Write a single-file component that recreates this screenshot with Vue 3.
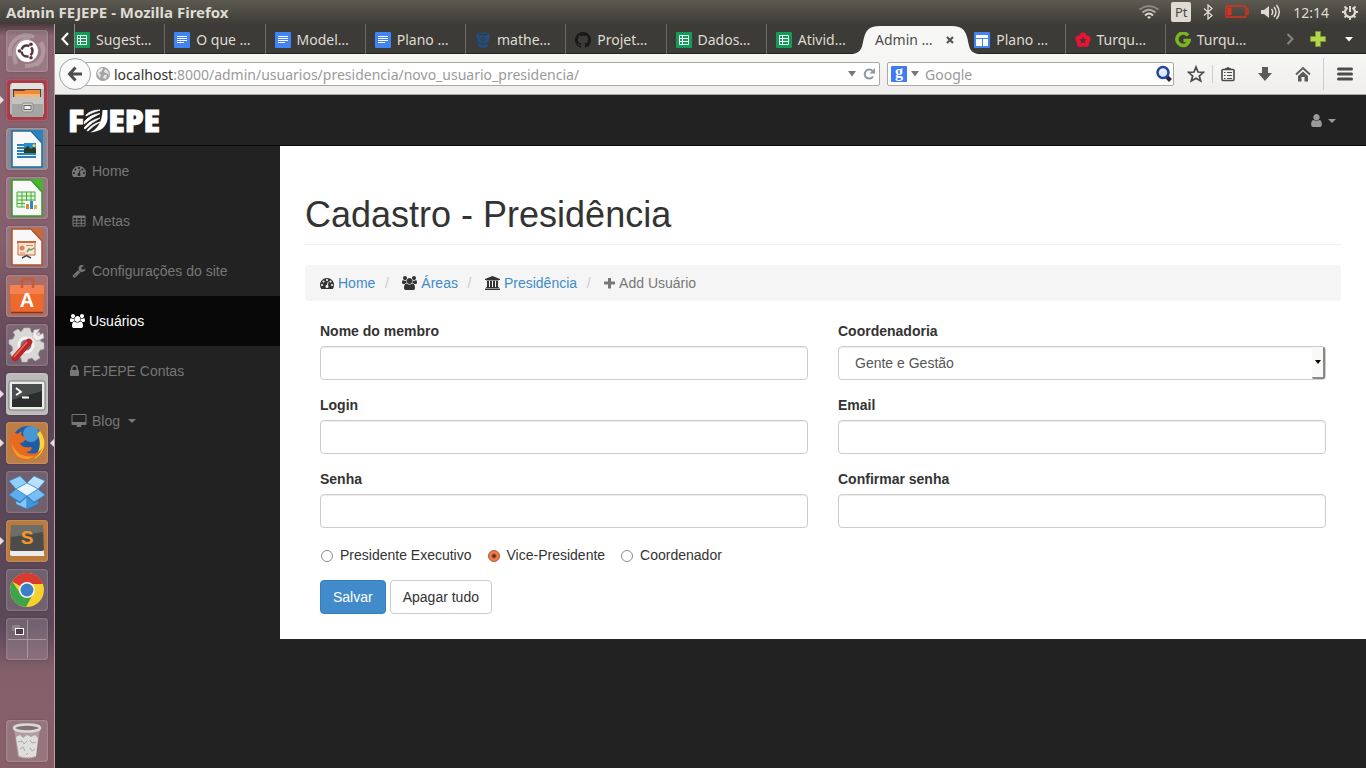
<script setup>
import { ref } from 'vue'

const fa = {
  user: { w: 1792, d: 'M1536 1399q0 109-62.5 187t-150.5 78h-854q-88 0-150.5-78t-62.5-187q0-85 8.5-160.5t31.5-152 58.5-131 94-89 134.5-34.5q131 128 313 128t313-128q76 0 134.5 34.5t94 89 58.5 131 31.5 152 8.5 160.5zm-256-887q0 159-112.5 271.5t-271.5 112.5-271.5-112.5-112.5-271.5 112.5-271.5 271.5-112.5 271.5 112.5 112.5 271.5z' },
  gauge: { w: 1792, d: 'M384 1152q0-53-37.5-90.5t-90.5-37.5-90.5 37.5-37.5 90.5 37.5 90.5 90.5 37.5 90.5-37.5 37.5-90.5zm192-448q0-53-37.5-90.5t-90.5-37.5-90.5 37.5-37.5 90.5 37.5 90.5 90.5 37.5 90.5-37.5 37.5-90.5zm428 481l101-382q6-26-7.5-48.5t-38.5-29.5-48 6.5-30 39.5l-101 382q-60 5-107 43.5t-63 98.5q-20 77 20 146t117 89 146-20 89-117q16-60-6-117t-72-91zm660-33q0-53-37.5-90.5t-90.5-37.5-90.5 37.5-37.5 90.5 37.5 90.5 90.5 37.5 90.5-37.5 37.5-90.5zm-640-640q0-53-37.5-90.5t-90.5-37.5-90.5 37.5-37.5 90.5 37.5 90.5 90.5 37.5 90.5-37.5 37.5-90.5zm448 192q0-53-37.5-90.5t-90.5-37.5-90.5 37.5-37.5 90.5 37.5 90.5 90.5 37.5 90.5-37.5 37.5-90.5zm320 448q0 261-141 483-19 29-54 29h-1402q-35 0-54-29-141-221-141-483 0-182 71-348t191-286 286-191 348-71 348 71 286 191 191 286 71 348z' },
  lock: { w: 1152, x: 320, d: 'M640 768h512v-192q0-106-75-181t-181-75-181 75-75 181v192zm832 96v576q0 40-28 68t-68 28h-960q-40 0-68-28t-28-68v-576q0-40 28-68t68-28h32v-192q0-184 132-316t316-132 316 132 132 316v192h32q40 0 68 28t28 68z' },
  users: { w: 1920, d: 'M593 896q-162 5-265 128h-134q-82 0-138-40.5t-56-118.5q0-353 124-353 6 0 43.5 21t97.5 42.5 119 21.5q67 0 133-23-5 37-5 66 0 139 81 256zm1071 637q0 120-73 189.5t-194 69.5h-874q-121 0-194-69.5t-73-189.5q0-53 3.5-103.5t14-109 26.5-108.5 43-97.5 62-81 85.5-53.5 111.5-20q10 0 43 21.5t73 48 107 48 135 21.5 135-21.5 107-48 73-48 43-21.5q61 0 111.5 20t85.5 53.5 62 81 43 97.5 26.5 108.5 14 109 3.5 103.5zm-1024-1277q0 106-75 181t-181 75-181-75-75-181 75-181 181-75 181 75 75 181zm704 384q0 159-112.5 271.5t-271.5 112.5-271.5-112.5-112.5-271.5 112.5-271.5 271.5-112.5 271.5 112.5 112.5 271.5zm576 225q0 78-56 118.5t-138 40.5h-134q-103-123-265-128 81-117 81-256 0-29-5-66 66 23 133 23 59 0 119-21.5t97.5-42.5 43.5-21q124 0 124 353zm-128-609q0 106-75 181t-181 75-181-75-75-181 75-181 181-75 181 75 75 181z' },
  wrench: { w: 1792, d: 'M448 1472q0-26-19-45t-45-19-45 19-19 45 19 45 45 19 45-19 19-45zm644-420l-682 682q-37 37-90 37-52 0-91-37l-106-108q-38-36-38-90 0-53 38-91l681-681q39 98 114.5 173.5t173.5 114.5zm634-435q0 39-23 106-47 134-164.5 217.5t-258.5 83.5q-185 0-316.5-131.5t-131.5-316.5 131.5-316.5 316.5-131.5q58 0 121.5 16.5t107.5 46.5q16 11 16 28t-16 28l-293 169v224l193 107q5-3 79-48.5t135.5-81 70.5-35.5q15 0 23.5 10t8.5 25z' },
  desktop: { w: 2048, d: 'M1856 992v-832q0-13-9.5-22.5t-22.5-9.5h-1600q-13 0-22.5 9.5t-9.5 22.5v832q0 13 9.5 22.5t22.5 9.5h1600q13 0 22.5-9.5t9.5-22.5zm128-832v1088q0 66-47 113t-113 47h-544q0 37 16 77.5t32 71 16 43.5q0 26-19 45t-45 19h-512q-26 0-45-19t-19-45q0-14 16-44t32-70 16-78h-544q-66 0-113-47t-47-113v-1088q0-66 47-113t113-47h1600q66 0 113 47t47 113z' },
  bank: { w: 1920, d: 'M960 0l960 384v128h-128q0 26-20.5 45t-48.5 19h-1526q-28 0-48.5-19t-20.5-45h-128v-128zm-704 640h256v768h128v-768h256v768h128v-768h256v768h128v-768h256v768h59q28 0 48.5 19t20.5 45v64h-1664v-64q0-26 20.5-45t48.5-19h59v-768zm1595 960q28 0 48.5 19t20.5 45v128h-1920v-128q0-26 20.5-45t48.5-19h1782z' },
  table: { w: 1792, d: 'M200 192h1392a136 136 0 0 1 136 136v1144a136 136 0 0 1-136 136H200a136 136 0 0 1-136-136V328a136 136 0 0 1 136-136zM192 512v224h352V512zM672 512v224h448V512zM1248 512v224h352V512zM192 864v256h352V864zM672 864v256h448V864zM1248 864v256h352V864zM192 1248v224h352v-224zM672 1248v224h448v-224zM1248 1248v224h352v-224z' },
  plus: { w: 1408, x: 192, d: 'M704 256h384v448h448a64 64 0 0 1 64 64v256a64 64 0 0 1-64 64h-448v448a64 64 0 0 1-64 64H768a64 64 0 0 1-64-64v-448H256a64 64 0 0 1-64-64V768a64 64 0 0 1 64-64h448z' }
}
const faBox = n => `${fa[n].x || 0} 0 ${fa[n].w} 1792`
const faWidth = n => Math.round((fa[n].w * 14) / 1792)

const tabs = [
  { icon: 'sheet', text: 'Sugest…' },
  { icon: 'doc', text: 'O que …' },
  { icon: 'doc', text: 'Model…' },
  { icon: 'doc', text: 'Plano …' },
  { icon: 'bucket', text: 'mathe…' },
  { icon: 'cat', text: 'Projet…' },
  { icon: 'sheet', text: 'Dados…' },
  { icon: 'sheet', text: 'Ativid…' },
  { icon: '', text: 'Admin …', active: true },
  { icon: 'site', text: 'Plano …' },
  { icon: 'flower', text: 'Turqu…' },
  { icon: 'ring', text: 'Turqu…' }
]
const menu = [
  { icon: 'gauge', text: 'Home', fixed: true },
  { icon: 'table', text: 'Metas', fixed: true },
  { icon: 'wrench', text: 'Configurações do site', fixed: true },
  { icon: 'users', text: 'Usuários', active: true },
  { icon: 'lock', text: 'FEJEPE Contas' },
  { icon: 'desktop', text: 'Blog', fixed: true, caret: true }
]
const crumbs = [
  { icon: 'gauge', text: 'Home' },
  { icon: 'users', text: 'Áreas' },
  { icon: 'bank', text: 'Presidência' },
  { icon: 'plus', text: 'Add Usuário', current: true }
]
const launchers = [
  { id: 'dash', label: 'Dash' },
  { id: 'files', label: 'Arquivos', left: true },
  { id: 'writer', label: 'Writer' },
  { id: 'calc', label: 'Calc' },
  { id: 'impress', label: 'Impress' },
  { id: 'store', label: 'Central de programas' },
  { id: 'settings', label: 'Configurações' },
  { id: 'terminal', label: 'Terminal', left: true },
  { id: 'firefox', label: 'Firefox', left: true, right: true },
  { id: 'dropbox', label: 'Dropbox' },
  { id: 'sublime', label: 'Sublime Text', left: true },
  { id: 'chrome', label: 'Chrome' },
  { id: 'workspace', label: 'Áreas de trabalho' },
  { id: 'trash', label: 'Lixeira' }
]
const fields = [
  { id: 'nome', label: 'Nome do membro', type: 'text' },
  { id: 'coord', label: 'Coordenadoria', type: 'select' },
  { id: 'login', label: 'Login', type: 'text' },
  { id: 'email', label: 'Email', type: 'email' },
  { id: 'senha', label: 'Senha', type: 'password' },
  { id: 'senha2', label: 'Confirmar senha', type: 'password' }
]
const roles = ['Presidente Executivo', 'Vice-Presidente', 'Coordenador']
const role = ref('Vice-Presidente')
</script>

<template>
  <div class="desktop">
    <header class="panel">
      <span class="panel-title">Admin FEJEPE - Mozilla Firefox</span>
      <div class="status">
        <svg class="wifi" width="20" height="16" viewBox="0 0 20 16" fill="none" stroke-width="1.800">
          <path d="M.5 5.500Q10-1.500 19.500 5.500" stroke="#8b8880" /><path d="M3.500 8.500Q10 3 16.500 8.500" stroke="#b0ada4" />
          <path d="M6 11.500Q10 7.500 14 11.500" stroke="#dfdbd2" /><path d="M8 13Q10 11.500 12 13L10 15z" fill="#dfdbd2" />
        </svg>
        <span class="lang">Pt</span>
        <svg class="bt" width="10" height="16" viewBox="0 0 10 16" fill="none" stroke="#dfdbd2" stroke-width="1.300"><path d="M1 4.500L9 11.500L5 15V1L9 4.500L1 11.500" /></svg>
        <svg class="battery" width="24" height="14" viewBox="0 0 24 14" fill="none" stroke="#e0301e" stroke-width="1.300"><rect x="1" y="1" width="20" height="11" rx="1" /><path d="M21.500 4H23V9H21.500" /><rect x="2.500" y="2.500" width="4" height="8" fill="#e0301e" stroke="none" /></svg>
        <svg class="sound" width="20" height="16" viewBox="0 0 20 16" fill="none" stroke="#dfdbd2" stroke-width="1.500"><path d="M0 6H3L8 2V14L3 10H0z" fill="#dfdbd2" stroke="none" /><path d="M10.500 5Q13 8 10.500 11M13 3Q17 8 13 13M15.500 1Q21 8 15.500 15" /></svg>
        <time class="clock">12:14</time>
        <svg width="16" height="16" viewBox="0 0 16 16" fill="none" stroke="#dfdbd2" stroke-width="2"><path d="M5.500 3.700A5 5 0 1 0 10.500 3.700" stroke-width="2.200" /><path d="M8 2V8" /><path d="M2.500 2.500L4.500 4.500M13.500 2.500L11.500 4.500M0 8H3M13 8H16M2.500 13.500L4.500 11.500M13.500 13.500L11.500 11.500M8 13V16" stroke-width="1.800" /></svg>
      </div>
    </header>

    <div class="workarea">
      <nav class="launcher" aria-label="Lançador">
        <button v-for="l in launchers" :key="l.id" :aria-label="l.label" :class="['tile', l.id, { running: l.left, focused: l.right }]">
          <svg viewBox="0 0 42 42" width="42" height="42">
            <g v-if="l.id === 'dash'" fill="none">
              <path d="M4 26C2 10 16 2 28 7M10 34C5 20 12 10 24 9M35 12C42 24 33 37 19 36M30 35C38 30 39 19 34 13" stroke="#fff" stroke-opacity=".22" stroke-width="4" />
              <circle cx="21" cy="21" r="11" fill="#fff" /><circle cx="21" cy="21" r="5.500" stroke="#5a3445" stroke-width="2.500" stroke-dasharray="9.500 2" stroke-dashoffset="4.700" />
              <g fill="#5a3445"><circle cx="13.500" cy="21" r="1.800" /><circle cx="25" cy="14.300" r="1.800" /><circle cx="25" cy="27.700" r="1.800" /></g>
            </g>
            <g v-else-if="l.id === 'files'">
              <path d="M4 7Q4 4 7 4H35Q38 4 38 7V34Q38 36 36 36H6Q4 36 4 34z" fill="#b9b9b5" /><path d="M6 4H36L38 10H4z" fill="#e2e2de" /><path d="M7 10H35V20H7z" fill="#5b4038" />
              <path d="M8 12H18L20 11H34V18H8z" fill="#ef8a3c" /><path d="M9 15H34V19H9z" fill="#f7b572" /><path d="M6 18H37V38H6z" fill="#a5a5a2" /><path d="M6 18H37V25H6z" fill="#c2c2bf" />
              <rect x="16" y="24" width="11" height="9" rx="2" fill="#cfcfcc" stroke="#8b8b89" /><rect x="18" y="26.500" width="7" height="4" fill="#eee" stroke="#666" />
            </g>
            <g v-else-if="['writer', 'calc', 'impress'].includes(l.id)">
              <path d="M6 3H25L36 15V39H6z" fill="#f8f8f8" :stroke="{ writer: '#196da5', calc: '#2f9c26', impress: '#b15325' }[l.id]" stroke-width="1.500" />
              <path d="M25 2H37V15z" :fill="{ writer: '#2c82bd', calc: '#47b62f', impress: '#c66a3c' }[l.id]" />
              <g v-if="l.id === 'writer'"><path d="M11 17H18M11 20H18M11 23H18M11 26H30M11 29H30" stroke="#2881b8" stroke-width="1.800" /><rect x="18" y="15" width="12" height="10" fill="#268bd2" /><path d="M18 25V21L22 18L25 21L28 19L30 21V25z" fill="#2d3c1d" /><circle cx="28" cy="17.500" r="1.500" fill="#ffd23e" /></g>
              <g v-else-if="l.id === 'calc'"><path d="M11 15H29V30H11zM11 19H29M11 23H29M11 26.500H29M16 15V30M20.500 15V30M25 15V30" fill="#e3f5dc" stroke="#49ac38" /><rect x="19" y="24" width="12" height="8" fill="#fff" /><path d="M20 27H23V32H20z" fill="#e28638" /><path d="M24 24H27V32H24z" fill="#2b8cc4" /><path d="M28 28H31V32H28z" fill="#e2b23a" /></g>
              <g v-else><path d="M12 16H29V29H12z" fill="#fbe3d5" stroke="#c9683a" /><path d="M11 16H30" stroke="#c9683a" stroke-width="2" /><circle cx="16" cy="22" r="2.500" fill="#dc8357" /><path d="M14 27H19M20 19.500H27" stroke="#dc8357" /><path d="M21 26L23 23L25 24L28 22" fill="none" stroke="#58a55c" stroke-width="1.500" /><path d="M16 32L20.500 29.500L25 32" fill="none" stroke="#444" stroke-width="1.500" /></g>
            </g>
            <g v-else-if="l.id === 'store'"><path d="M4 10H38L37 37H5z" fill="#ee6a2c" /><path d="M4 10H38V19H4z" fill="#f58150" /><path d="M16 13V7Q16 4 19 4H24Q27 4 27 7V13" fill="none" stroke="#c75b36" stroke-width="2.500" /><path d="M5 37.500H37" stroke="#8d3513" stroke-width="1.500" /><text x="21" y="32" text-anchor="middle" class="glyph" font-size="20" fill="#fff">A</text></g>
            <g v-else-if="l.id === 'settings'"><path d="M18 4H24L25 8L29 10L33 8L36 13L34 17L38 19V25L34 26L32 30L34 34L29 37L26 34L22 35L21 38H16L15 34L11 32L7 34L4 29L7 26L6 22L3 20V16L7 15L9 11L7 8L12 5L15 8z" fill="#d8d8d5" stroke="#b5b3b3" stroke-width=".6" /><circle cx="20" cy="21" r="7" fill="#83777f" stroke="#f2f2f0" stroke-width="3" /><path d="M22 19L30 11" stroke="#e6e6e6" stroke-width="5" /><path d="M28 6L26 13L31 17L38 14L37 9L33 12L30 10L34 5z" fill="#eee" stroke="#aaa" stroke-width=".6" /><path d="M9 34L23 18" stroke="#bb2525" stroke-width="6.500" stroke-linecap="round" /><path d="M8 33L21 18" stroke="#ed6b63" stroke-width="1.500" /></g>
            <g v-else-if="l.id === 'terminal'"><rect x="3" y="8" width="36" height="29" rx="2" fill="#ececea" stroke="#777" /><rect x="6" y="11" width="30" height="23" fill="#2b2d2c" /><path d="M6 11H36V18L6 27z" fill="#4b4d4c" /><path d="M10 15L15 19L10 22M16 24.500H23" stroke="#fff" stroke-width="1.800" fill="none" /></g>
            <g v-else-if="l.id === 'firefox'"><circle cx="22" cy="20" r="16" fill="#1f5ca5" /><circle cx="25" cy="12" r="8" fill="#4a96d0" /><path d="M34 9C41 18 40 31 28 37C34 30 36 19 31 12z" fill="#ffd33b" /><path d="M7 9C3 17 3 28 10 34C18 41 32 39 37 25C33 32 26 33 20 30C24 30 27 27 25 25C21 26 15 25 14 21C17 21 20 18 20 15C16 15 14 13 16 9L11 12z" fill="#e66a1f" /><path d="M6 21C9 32 19 36 29 34C20 41 6 36 6 21z" fill="#f49a29" /></g>
            <g v-else-if="l.id === 'dropbox'" stroke="#2f84cf" stroke-width=".6"><path d="M3 10L14 5L21 12L10 18z" fill="#8fd0fb" /><path d="M39 10L28 5L21 12L32 18z" fill="#b8e2ff" /><path d="M3 24L10 18L21 25L14 31z" fill="#5baff0" /><path d="M39 24L32 18L21 25L28 31z" fill="#75c0f7" /><path d="M10 18L21 12L32 18L21 25z" fill="#e7f5ff" /><path d="M10 30L14 32L21 26V38L10 33z" fill="#84c8f8" /><path d="M32 30L28 32L21 26V38L32 33z" fill="#3e97dd" /></g>
            <g v-else-if="l.id === 'sublime'"><path d="M6 7L4 34Q4 36 6 36H37Q39 36 38 34L36 7Q36 5 34 5H8Q6 5 6 7z" fill="#ececec" /><path d="M7 5H35Q37 5 37 7L38 29Q38 31 36 31H6Q4 31 4 29L5 7Q5 5 7 5z" fill="#4c4c4b" /><path d="M7 5H35Q37 5 37 7V12L5 17V7Q5 5 7 5z" fill="#6d6d6a" /><text x="21" y="24" text-anchor="middle" class="glyph" font-size="19" fill="#f79628">S</text></g>
            <g v-else-if="l.id === 'chrome'"><circle cx="21" cy="21" r="17" fill="#f8d12c" /><path d="M21 21L6.300 12.500A17 17 0 0 1 37 15H21z" fill="#d93a30" /><path d="M6.300 12.500A17 17 0 0 0 20 38L27 25L21 21L14 24z" fill="#3fa34a" /><circle cx="21" cy="21" r="8" fill="#f5f5f5" /><circle cx="21" cy="21" r="6.500" fill="#3b7fc9" /></g>
            <g v-else-if="l.id === 'workspace'" fill="none"><path d="M2 21.500H40M21.500 2V40" stroke="#a19aa0" /><rect x="6" y="7" width="8" height="6" fill="#8d838b" /><rect x="9.500" y="10.500" width="8" height="6" fill="#4f3d49" stroke="#fff" /></g>
            <g v-else><path d="M8 8L12 37Q21 40 30 37L34 8z" fill="#d9d2d5" fill-opacity=".42" /><ellipse cx="21" cy="8" rx="13" ry="3.500" fill="#857078" stroke="#d9d9d7" stroke-width="2.500" /><path d="M10 17L14 15L17 18L21 15L25 17L29 15L32 18L30 36Q21 39 13 36z" fill="#dededc" /><path d="M12 22L16 21L18 24L21 21M24 20L26 23L30 22M14 29L17 27L19 31M24 28L26 31L29 29M20 35L22 33" stroke="#aaaaa8" fill="none" /></g>
          </svg>
        </button>
      </nav>

      <div class="browser">
        <div class="tabbar">
          <button class="scroll-left" aria-label="Abas anteriores"><svg width="8" height="14" viewBox="0 0 8 14" fill="none" stroke="#fff" stroke-width="2.200"><path d="M7 1L1.500 7L7 13" /></svg></button>
          <div class="strip">
            <button v-for="(t, i) in tabs" :key="i" :class="['tab', { active: t.active }]">
              <svg v-if="t.active" class="shape" viewBox="0 0 128 30" preserveAspectRatio="none"><path d="M0 30C11 29 10 21 12 14S16 2 28 2H100C112 2 114 7 116 14S117 29 128 30z" fill="#f7f7f6" /></svg>
              <svg v-if="t.icon" class="fav" width="16" height="16" viewBox="0 0 16 16">
                <g v-if="t.icon === 'sheet'"><rect width="16" height="16" rx="1" fill="#109d58" /><path d="M3.500 3.500H12.500V12.500H3.500zM3.500 6.500H12.500M3.500 9.500H12.500M6.500 3.500V12.500" fill="none" stroke="#fff" /></g>
                <g v-else-if="t.icon === 'doc'"><rect width="16" height="16" rx="1" fill="#4384f4" /><path d="M3 4.500H13M3 6.500H13M3 8.500H13M3 10.500H10" stroke="#fff" /></g>
                <g v-else-if="t.icon === 'site'"><rect width="16" height="16" rx="1" fill="#4384f4" /><path d="M2 3H14V6H2zM2 7H8V14H2zM9 7H14V14H9z" fill="#fff" /></g>
                <g v-else-if="t.icon === 'bucket'"><path d="M1 2Q8-1.500 15 2L13.500 10Q8 13 2.500 10zM3 11.500Q8 14 13 11.500L12.500 14.500Q8 17 3.500 14.500z" fill="#205081" /><ellipse cx="8" cy="2.500" rx="5" ry="1" fill="#3c3b37" /><circle cx="8" cy="7.500" r="2" fill="#205081" stroke="#3c3b37" /></g>
                <path v-else-if="t.icon === 'cat'" fill="#191717" d="M8 0C3.580 0 0 3.580 0 8c0 3.540 2.290 6.530 5.470 7.590.4.070.55-.17.55-.38 0-.19-.01-.82-.01-1.490-2.010.37-2.530-.49-2.690-.94-.09-.23-.48-.94-.82-1.130-.28-.15-.68-.52-.01-.53.63-.01 1.080.58 1.230.82.72 1.210 1.870.87 2.330.66.070-.52.28-.87.51-1.070-1.780-.2-3.640-.89-3.640-3.950 0-.87.31-1.590.82-2.150-.08-.2-.36-1.020.08-2.120 0 0 .67-.21 2.200.82.64-.18 1.320-.27 2-.27s1.360.09 2 .27c1.530-1.040 2.200-.82 2.200-.82.44 1.100.16 1.920.08 2.120.51.56.82 1.270.82 2.150 0 3.070-1.870 3.750-3.650 3.950.29.25.54.73.54 1.480 0 1.070-.01 1.930-.01 2.200 0 .21.15.46.55.38A8.010 8.010 0 0 0 16 8c0-4.420-3.580-8-8-8z" />
                <g v-else-if="t.icon === 'flower'" fill="#ee1133"><circle cx="8" cy="4" r="3.500" /><circle cx="12" cy="7" r="3.500" /><circle cx="10.500" cy="11.500" r="3.500" /><circle cx="5.500" cy="11.500" r="3.500" /><circle cx="4" cy="7" r="3.500" /><path d="M8 4.500L9 7.200H12L9.700 9L10.500 12L8 10.200L5.500 12L6.300 9L4 7.200H7z" fill="#3c3b37" /></g>
                <path v-else d="M13 3.500A6.200 6.200 0 1 0 14.200 8.500H8.500" fill="none" stroke="#7ab51d" stroke-width="3.500" />
              </svg>
              <span class="tab-text">{{ t.text }}</span>
              <svg v-if="t.active" class="close" width="8" height="8" viewBox="0 0 8 8" stroke="#555" stroke-width="2.200"><path d="M1 1L7 7M7 1L1 7" /></svg>
            </button>
          </div>
          <div class="tab-tools">
            <button aria-label="Próximas abas"><svg width="8" height="12" viewBox="0 0 8 12" fill="none" stroke="#888680" stroke-width="2"><path d="M1.500 1L6.500 6L1.500 11" /></svg></button>
            <button aria-label="Nova aba"><svg width="16" height="16" viewBox="0 0 16 16"><path d="M5.500.5H10.500V5.500H15.500V10.500H10.500V15.500H5.500V10.500H.5V5.500H5.500z" fill="#b5d54a" stroke="#76983a" /></svg></button>
            <button aria-label="Listar abas"><svg width="8" height="5" viewBox="0 0 8 5"><path d="M0 0H8L4 4.500z" fill="#fff" /></svg></button>
          </div>
        </div>

        <div class="toolbar">
          <button class="back" aria-label="Voltar"><svg width="16" height="16" viewBox="0 0 16 16" fill="none" stroke="#4c4c4c" stroke-width="3"><path d="M8.500 1.500L2.500 8L8.500 14.500M2.500 8H15" /></svg></button>
          <div class="urlbar">
            <svg width="14" height="14" viewBox="0 0 14 14"><circle cx="7" cy="7" r="7" fill="#a3a3a3" /><path d="M2 3Q4 .5 7 1L6 4L3 6L5 8L4 11L1 7zM9 2L12 4L13 8L10 6L8 5zM8 8L11 8L10 12L7 11z" fill="#e6e6e6" /></svg>
            <div class="url" role="textbox" aria-label="Endereço"><b>localhost</b>:8000/admin/usuarios/presidencia/novo_usuario_presidencia/</div>
            <svg width="8" height="6" viewBox="0 0 8 6"><path d="M0 0H8L4 5.500z" fill="#777" /></svg>
            <svg class="reload" width="12" height="12" viewBox="0 0 12 12"><path d="M10 8.500A4.500 4.500 0 1 1 9.500 3" fill="none" stroke="#8c979e" stroke-width="2" /><path d="M12 0V5.500H6.500z" fill="#8c979e" /></svg>
          </div>
          <div class="search">
            <span class="engine">g</span>
            <svg class="drop" width="8" height="6" viewBox="0 0 8 6"><path d="M0 0H8L4 5.500z" fill="#777" /></svg>
            <input type="text" placeholder="Google" aria-label="Pesquisar" />
            <svg width="18" height="18" viewBox="0 0 18 18"><path d="M12.500 11.500L16.500 15.500" stroke="#26233a" stroke-width="4" /><circle cx="9" cy="7.500" r="5.500" fill="#dce9fa" stroke="#27459b" stroke-width="2.500" /><path d="M6 6.500Q8 3.500 11 5.500" stroke="#fff" fill="none" /></svg>
          </div>
          <div class="tools">
            <button aria-label="Favoritar" class="star"><svg width="18" height="18" viewBox="0 0 18 18"><path d="M9 2L11 7L16.500 7.300L12.300 11L13.700 16L9 13.200L4.300 16L5.700 11L1.500 7.300L7 7z" fill="none" stroke="#4c4c4c" stroke-width="1.700" /></svg></button>
            <i class="sep"></i>
            <button aria-label="Favoritos" class="list"><svg width="16" height="16" viewBox="0 0 16 16"><rect x="2" y="3.500" width="12" height="11" rx="1" fill="none" stroke="#4c4c4c" stroke-width="1.600" /><path d="M5 4V2H6.500Q8 0 9.500 2H11V4z" fill="#4c4c4c" /><path d="M4 6.500H5.500M7 6.500H12M4 9.500H5.500M7 9.500H12M4 12.500H5.500M7 12.500H12" stroke="#4c4c4c" stroke-width="1" /></svg></button>
            <button aria-label="Downloads" class="download"><svg width="16" height="16" viewBox="0 0 16 16"><path d="M5 1H11V7H15L8 15L1 7H5z" fill="#5b5b5b" /></svg></button>
            <button aria-label="Início"><svg width="16" height="16" viewBox="0 0 16 16"><path d="M1 8.500L8 2L15 8.500" fill="none" stroke="#5b5b5b" stroke-width="1.800" /><path d="M3 10L8 5.500L13 10V15.500H9.500V11H6.500V15.500H3z" fill="#5b5b5b" /></svg></button>
            <i class="sep tall"></i>
            <button aria-label="Menu" class="burger"><svg width="16" height="14" viewBox="0 0 16 14" stroke="#4c4c4c" stroke-width="3" stroke-linecap="round"><path d="M1.500 2H14.500M1.500 7H14.500M1.500 12H14.500" /></svg></button>
          </div>
        </div>

        <div class="site">
          <header class="navbar">
            <a href="#" class="brand" aria-label="FEJEPE">
              <span>F</span>
              <svg width="24" height="24" viewBox="0 0 24 24" fill="#fff"><path d="M2 6Q7 1 16 1Q9 3 2 7zM0 13Q6 5.500 16 4.500Q8 8 0 15zM0 19Q6 11 16 9Q8 13 1 20zM3 21.500Q8 15 16 13Q10 16 4 22z" stroke="#fff" stroke-width=".8" /><path d="M18.500 1H23.500V10Q22 22 6 23.500Q18 18 18.500 1z" /></svg>
              <span>EPE</span>
            </a>
            <button class="account" aria-label="Conta"><svg width="15" height="15" viewBox="0 0 1792 1792"><path :d="fa.user.d" /></svg><i class="caret"></i></button>
          </header>
          <div class="columns">
            <nav class="sidebar">
              <a v-for="m in menu" :key="m.text" href="#" :class="{ active: m.active }">
                <span :class="{ fixed: m.fixed }"><svg :width="faWidth(m.icon)" height="14" :viewBox="faBox(m.icon)"><path :d="fa[m.icon].d" fill-rule="evenodd" /></svg></span>
                {{ m.text }}
                <i v-if="m.caret" class="caret"></i>
              </a>
            </nav>
            <main class="content">
              <h1>Cadastro - Presidência</h1>
              <ol class="breadcrumb">
                <li v-for="c in crumbs" :key="c.text" :class="{ current: c.current }">
                  <svg :width="faWidth(c.icon)" height="14" :viewBox="faBox(c.icon)"><path :d="fa[c.icon].d" /></svg>
                  <span v-if="c.current">{{ c.text }}</span>
                  <a v-else href="#">{{ c.text }}</a>
                </li>
              </ol>
              <form @submit.prevent>
                <div class="fields">
                  <div v-for="f in fields" :key="f.id" class="field">
                    <label :for="f.id">{{ f.label }}</label>
                    <div v-if="f.type === 'select'" class="select">
                      <select :id="f.id"><option>Gente e Gestão</option></select>
                      <span class="arrow"><svg width="6" height="4" viewBox="0 0 6 4"><path d="M0 0H6L3 4z" /></svg></span>
                    </div>
                    <input v-else :id="f.id" :type="f.type" />
                  </div>
                </div>
                <div class="radios">
                  <label v-for="r in roles" :key="r"><input v-model="role" type="radio" name="role" :value="r" />{{ r }}</label>
                </div>
                <div class="actions">
                  <button type="submit" class="btn primary">Salvar</button>
                  <button type="reset" class="btn">Apagar tudo</button>
                </div>
              </form>
            </main>
          </div>
        </div>
      </div>
    </div>
  </div>
</template>

<style>
html, body { margin: 0; background: #222; }
</style>

<style scoped>
* { box-sizing: border-box; }
button { border: 0; padding: 0; background: none; font: inherit; color: inherit; display: flex; align-items: center; justify-content: center; }
svg { display: block; flex: none; }
a { text-decoration: none; }
.desktop { min-height: 100vh; display: flex; flex-direction: column; font-family: "Noto Sans", "Open Sans", sans-serif; font-size: 14px; }

.panel { height: 24px; display: flex; align-items: center; justify-content: space-between; padding: 0 8px 0 6px; color: #dfdbd2; background: linear-gradient(#5c5a50, #3d3c38); }
.panel-title { font-weight: 700; font-size: 15px; line-height: 20px; }
.status { display: flex; align-items: center; }
.lang { width: 20px; height: 20px; margin: 0 12px; border-radius: 2px; background: #dfdbd2; color: #4a4943; text-align: center; font-size: 13px; line-height: 20px; }
.battery { margin-left: 12px; }
.sound { margin: 0 12px; }
.clock { margin-right: 13px; }

.workarea { flex: 1; display: flex; }
.launcher { width: 55px; flex: none; display: flex; flex-direction: column; gap: 7px; padding: 6px 0 6px 6px; border-right: 1px solid #c29aa5; background: linear-gradient(#4c3a40, #896370 12px, #865f6c 220px, #6a4c5c 300px, #594658 380px, #5b4858 600px, #85606b 650px, #875f69); }
.tile { position: relative; width: 42px; height: 42px; border-radius: 4px; box-shadow: inset 0 0 2px #ffffff80, 0 0 2px #00000040; background: #ffffff24; }
.tile.files { background: #a53d4a; }
.tile.writer { background: #8b8793; }
.tile.store { background: #a66f6b; }
.tile.terminal { background: #bbb9b9; }
.tile.firefox { background: #bd7d46; }
.tile.sublime { background: #b97a3c; }
.tile.trash { margin-top: auto; }
.running::before, .focused::after { content: ""; position: absolute; top: 17px; border: 4px solid transparent; }
.running::before { left: -6px; border-left-color: #e6dfe1; border-right: 0; }
.focused::after { right: -6px; border-right-color: #e6dfe1; border-left: 0; }
.glyph { font-family: "Liberation Sans", sans-serif; font-weight: 700; }

.browser { flex: 1; min-width: 0; display: flex; flex-direction: column; }
.tabbar { height: 30px; display: flex; background: linear-gradient(#3c3b37 29px, #242320 29px); color: #dfdbd2; }
.scroll-left { width: 20px; border-right: 1px solid #8a8880; }
.strip { flex: 1; min-width: 0; display: flex; overflow: hidden; }
.tab { position: relative; flex: 1 1 0; min-width: 0; justify-content: flex-start; gap: 6px; padding: 1px 0 0 9px; border-right: 1px solid #6a6861; white-space: nowrap; }
.tab:first-child { margin-left: -10px; }
.tab:last-child { border: 0; }
.tab.active { color: #4c4c4c; border: 0; z-index: 1; }
.tab:has(+ .active) { border: 0; }
.shape { position: absolute; left: -14px; top: 0; width: calc(100% + 28px); height: 30px; }
.tab-text { position: relative; }
.close { position: relative; margin-left: auto; margin-right: 11px; }
.tab-tools { width: 101px; display: flex; padding-left: 11px; }
.tab-tools button { width: 29px; }
.tab-tools button:last-child { width: 35px; }

.toolbar { height: 41px; display: flex; align-items: center; padding-left: 4px; background: linear-gradient(#f7f7f6, #efeeec); border-bottom: 1px solid #a9a8a4; }
.back { position: relative; z-index: 1; width: 32px; height: 32px; border: 1px solid #9ba4ac; border-radius: 50%; background: #fafafa; }
.urlbar, .search { display: flex; align-items: center; height: 24px; border: 1px solid #a9a9a5; border-radius: 2px; background: #fff; }
.urlbar { flex: 1; min-width: 0; margin-left: -8px; padding: 0 4px 0 12px; color: #9a9a9a; }
.url { flex: 1; min-width: 0; margin-left: 4px; overflow: hidden; white-space: nowrap; }
.url b { font-weight: 400; color: #333; }
.reload { margin-left: 7px; }
.search { width: 287px; margin-left: 7px; padding: 0 1px 0 3px; }
.engine { width: 16px; height: 16px; border-radius: 1px; background: #3f7bf5; color: #fff; text-align: center; font: 700 16px/12px "Liberation Serif", serif; }
.search .drop { margin: 0 6px 0 4px; }
.search input { flex: 1; min-width: 0; border: 0; padding: 0; background: none; font: inherit; outline: 0; }
.search input::placeholder { color: #999; opacity: 1; }
.tools { display: flex; align-items: center; padding-left: 6px; }
.tools button { width: 32px; height: 32px; }
.tools .list { width: 30px; }
.tools .download { width: 44px; }
.tools .burger { width: 42px; }
.sep { width: 1px; height: 18px; background: #c8cdd2; }
.sep.tall { height: 32px; margin-left: 4px; }

.site { flex: 1; background: #222; font: 14px/20px "Liberation Sans", Arial, sans-serif; color: #333; }
.navbar { height: 51px; display: flex; align-items: center; justify-content: space-between; padding: 1px 30px 0 13px; border-bottom: 1px solid #080808; }
.brand { display: flex; align-items: center; padding-top: 1px; color: #fff; font: 900 30px/36px "Open Sans", Roboto, sans-serif; -webkit-text-stroke: 1px #fff; }
.account { gap: 4px; fill: #999; color: #999; }
.caret { display: inline-block; border: 4px solid transparent; border-top-color: currentColor; border-bottom: 0; }
.columns { display: flex; align-items: flex-start; }
.sidebar { width: 225px; flex: none; }
.sidebar a { display: flex; align-items: center; gap: 4px; height: 50px; padding-left: 15px; color: #777; fill: currentColor; }
.sidebar a.active { color: #fff; background: #080808; }
.sidebar .fixed { width: 18px; display: flex; justify-content: center; }
.sidebar .caret { margin-left: 4px; }
.content { flex: 1; min-width: 0; padding: 49px 25px 25px; background: #fff; }
h1 { margin: 0 0 20px; padding-bottom: 9px; border-bottom: 1px solid #eee; font-size: 36px; line-height: 40px; font-weight: 400; }
.breadcrumb { display: flex; margin: 0 0 20px; padding: 8px 15px; list-style: none; border-radius: 4px; background: #f5f5f5; }
.breadcrumb li { display: flex; align-items: center; gap: 4px; fill: #333; }
.breadcrumb li.current { color: #777; fill: #777; }
.breadcrumb li + li::before { content: "/"; width: 23px; text-align: center; color: #ccc; }
.breadcrumb a { color: #428bca; }
form { padding: 0 15px; }
.fields { display: grid; grid-template-columns: 1fr 1fr; gap: 15px 30px; }
.field label { display: block; margin-bottom: 5px; font-weight: 700; }
.field input, select { display: block; width: 100%; height: 34px; padding: 6px 12px; border: 1px solid #ccc; border-radius: 4px; background: #fff; box-shadow: inset 0 1px 1px #00000013; color: #555; font: inherit; }
.select { position: relative; }
select { appearance: none; padding: 0 16px; }
.arrow { position: absolute; right: 1px; top: 1px; bottom: 1px; width: 13px; display: flex; align-items: center; justify-content: center; border: solid #888; border-width: 0 2px 2px 0; border-radius: 2px; background: #f9f9f7; pointer-events: none; }
.radios { display: flex; gap: 16px; margin: 17px 0 15px; padding-left: 1px; }
.radios label { display: flex; align-items: center; gap: 7px; }
.radios input { appearance: none; width: 12px; height: 12px; margin: 2px 0 0; border: 1px solid #8c8c88; border-radius: 50%; background: #fff; }
.radios input:checked { border-color: #b5532f; background: radial-gradient(circle, #5a2c1c 0 1px, #f07b4c 3px); }
.actions { display: flex; gap: 4px; }
.btn { height: 34px; padding: 0 12px; border: 1px solid #ccc; border-radius: 4px; background: #fff; color: #333; }
.btn.primary { border-color: #357ebd; background: #428bca; color: #fff; }
</style>
